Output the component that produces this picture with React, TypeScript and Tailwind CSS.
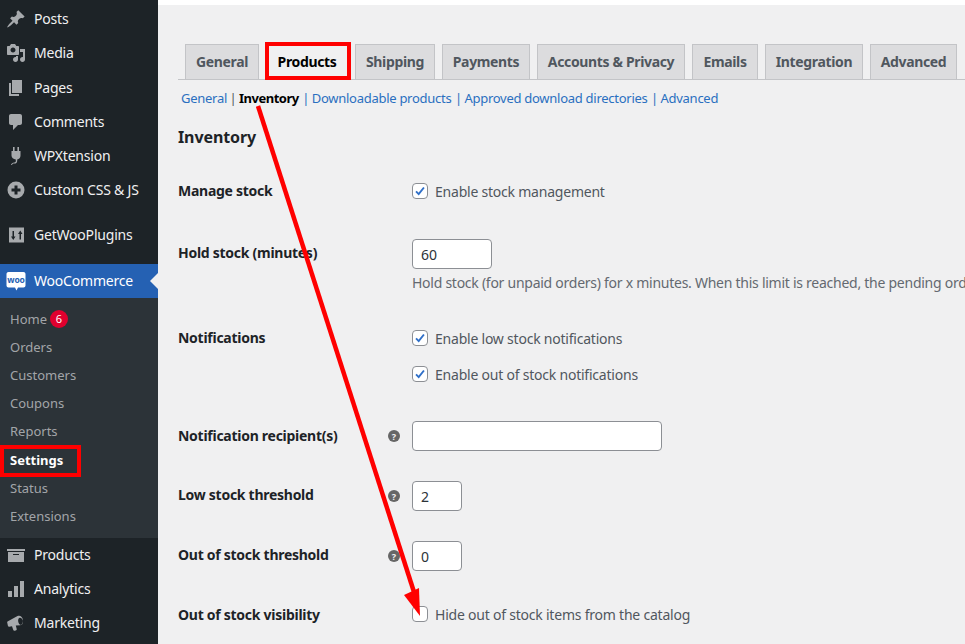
import React from "react";

const Pin = () => <path d="M10.44 3.02l1.82-1.82 6.36 6.35-1.83 1.82c-1.05-.68-2.48-.57-3.41.36l-.75.75c-.92.93-1.04 2.35-.35 3.41l-1.83 1.82-2.41-2.41-2.8 2.79c-.42.42-3.38 2.71-3.8 2.29s1.86-3.39 2.28-3.81l2.79-2.79L4.1 9.36l1.83-1.82c1.05.69 2.48.57 3.4-.36l.75-.75c.93-.92 1.05-2.35.36-3.41z" />;
const Media = () => <path d="M13 11V4c0-.55-.45-1-1-1h-1.67L9 1H5L3.67 3H2c-.55 0-1 .45-1 1v7c0 .55.45 1 1 1h10c.55 0 1-.45 1-1zM7 4.5c1.38 0 2.5 1.12 2.5 2.5S8.38 9.5 7 9.5 4.5 8.38 4.5 7 5.62 4.5 7 4.5zM14 6h5v10.5c0 1.38-1.12 2.5-2.5 2.5S14 17.88 14 16.5s1.12-2.5 2.5-2.5c.17 0 .34.02.5.05V9h-3V6zm-4 8.05V13h2v3.5c0 1.38-1.12 2.5-2.5 2.5S7 17.88 7 16.5 8.12 14 9.5 14c.17 0 .34.02.5.05z" />;
const Page = () => <path d="M6 15V2h10v13H6zm-1 1h8v2H3V5h2v11z" />;
const Comment = () => <path d="M5 2h9c1.1 0 2 .9 2 2v7c0 1.1-.9 2-2 2h-2l-5 5v-5H5c-1.1 0-2-.9-2-2V4c0-1.1.9-2 2-2z" />;
const Plug = () => <path d="M7 1h1.6v4h2.8V1H13v4h1.5v4.5c0 2.1-1.4 3.6-3.3 4V15c0 1.6-1.2 2.6-2.8 2.6-1.3 0-2 .4-2.4 1.4H5c.4-1.6 1.6-2.6 3.4-2.6.9 0 1.4-.4 1.4-1.4v-1.5C7.4 13.100 5.500 11.600 5.500 9.500V5H7z" />;
const PlusCircle = () => <path fillRule="evenodd" d="M10 1.500a8.500 8.500 0 1 1 0 17 8.500 8.500 0 0 1 0-17zM8.500 5.500v3h-3v3h3v3h3v-3h3v-3h-3v-3z" />;
const Sliders = () => <path fillRule="evenodd" d="M3 2.500h15v15H3zM6.500 6v5.500H5L7.250 15 9.500 11.500H8V6zM12 9h1.500v5.500H15V9h1.500L14.250 5.500z" />;
const Archive = () => <path d="M19 4v2H1V4h18zM2 7h16v10H2V7zm11 3V9H7v1h6z" />;
const Bars = () => <path d="M18 18V2h-4v16h4zm-6 0V7H8v11h4zm-6 0v-6H2v6h4z" />;
const Mega = () => <path fillRule="evenodd" d="M1.500 8.500l10-5.500c2.500-1 4.500.300 5.200 3 .7 2.900-.2 5.700-2.500 6.300l-4.400.3.900 3.400c.2.800-.3 1.200-1 1.400l-1 .3c-.7.200-1.300-.100-1.500-.9l-1.200-3.500-2.700.5c-.8.100-1.200-.3-1.400-1L1.200 9.500c-.1-.400 0-.800.300-1zM13.700 4.700c-1.300.3-1.900 2.200-1.400 4.200s1.900 3.300 3.100 3c1.300-.4 1.900-2.300 1.400-4.300s-1.900-3.200-3.100-2.900z" />;

function Item({ icon, label }: { icon: React.ReactNode; label: string }) {
  return (
    <div className="flex h-[34.2px] items-center text-[14px] tracking-[-0.2px] text-[#f0f0f1]">
      <svg viewBox="0 0 20 20" className="ml-[6px] h-[20px] w-[20px] shrink-0 fill-[#a7aaad]">{icon}</svg>
      <span className="ml-[8px] pb-[1px]">{label}</span>
    </div>
  );
}

function Sub({ label, active, badge }: { label: string; active?: boolean; badge?: string }) {
  return (
    <div className={`relative flex h-[28.2px] items-center pl-[10px] text-[13px] ${active ? "font-bold text-white" : "text-[#c3c4c7]/80"}`}>
      <span>{label}</span>
      {badge && (
        <span className="ml-[3px] flex h-[18px] w-[18px] items-center justify-center rounded-full bg-[#e0002e] text-[11px] text-white">{badge}</span>
      )}
      {active && <span className="absolute left-0 top-[-1px] h-[32px] w-[81px] border-[4px] border-[#ff0000]" />}
    </div>
  );
}

function Tab({ label, active, w }: { label: string; active?: boolean; w: string }) {
  return (
    <div className={`relative flex h-[35px] shrink-0 items-center justify-center whitespace-nowrap border border-b-0 border-[#c3c4c7] pb-[1px] text-[14px] font-bold tracking-[-0.35px] ${w} ${active ? "bg-[#f0f0f1] text-black" : "bg-[#dcdcde] text-[#50575e]"}`}>
      {label}
      {active && <span className="absolute bottom-[-1px] left-[-2px] top-[-3px] w-[86px] border-[4px] border-[#ff0000]" />}
    </div>
  );
}

function Check({ on, label }: { on?: boolean; label: string }) {
  return (
    <div className="flex items-center gap-[7px] text-[14px] tracking-[-0.22px] text-[#50575e]">
      <span className="flex h-[16px] w-[16px] items-center justify-center rounded-[4px] border border-[#8c8f94] bg-white">
        {on && (
          <svg viewBox="0 0 16 16" className="h-[14px] w-[14px]">
            <path d="M3.500 8.500l3 3 6-7.500" fill="none" stroke="#2f6fc8" strokeWidth="2.200" />
          </svg>
        )}
      </span>
      {label}
    </div>
  );
}

function Help() {
  return (
    <span className="flex h-[12px] w-[12px] items-center justify-center rounded-full bg-[#666666] text-[9px] font-bold leading-none text-[#f0f0f1]">?</span>
  );
}

function Row({ label, help, children, cls, lbl = "pb-[2px]" }: { label?: string; help?: boolean; children: React.ReactNode; cls: string; lbl?: string }) {
  return (
    <div className={`flex h-[30px] items-center ${cls}`}>
      <div className={`w-[210px] shrink-0 text-[14px] font-bold tracking-[-0.27px] text-[#1d2327] ${lbl}`}>{label}</div>
      <div className="flex w-[24px] shrink-0 items-center">{help && <Help />}</div>
      {children}
    </div>
  );
}

const inputCls = "h-[30px] rounded-[4px] border border-[#8c8f94] bg-white px-[8px] text-[14px] text-[#2c3338] outline-none";

const Pipe = ({ cls }: { cls: string }) => (
  <span className={`flex w-[2px] justify-center ${cls}`}>|</span>
);

export default function App() {
  return (
    <div className="flex h-[644px] w-[965px] overflow-hidden bg-[#f0f0f1] [font-family:'Noto_Sans',sans-serif]">
      <nav className="w-[158px] shrink-0 bg-[#1d2327] pt-[2.15px]">
        <Item icon={<Pin />} label="Posts" />
        <Item icon={<Media />} label="Media" />
        <Item icon={<Page />} label="Pages" />
        <Item icon={<Comment />} label="Comments" />
        <Item icon={<Plug />} label="WPXtension" />
        <Item icon={<PlusCircle />} label="Custom CSS & JS" />
        <div className="mt-[10.85px]">
          <Item icon={<Sliders />} label="GetWooPlugins" />
        </div>
        <div className="relative mt-[11.6px] flex h-[34px] items-center bg-[#2561b3] text-[14px] tracking-[-0.2px] text-white">
          <svg viewBox="0 0 20 20" className="ml-[6px] h-[20px] w-[20px] shrink-0">
            <path d="M2.500 1h15c1.100 0 2 .9 2 2v11.500c0 1.100-.9 2-2 2h-5.500l-1.500 3-1.500-3h-6.500c-1.100 0-2-.9-2-2V3c0-1.100.9-2 2-2z" fill="#fff" />
            <text x="10" y="12" textAnchor="middle" fontSize="8.500" fontWeight="700" fill="#2561b3">woo</text>
          </svg>
          <span className="ml-[8px] pb-[1px]">WooCommerce</span>
          <span className="absolute right-0 top-[9px] h-0 w-0 border-y-[8px] border-r-[8px] border-y-transparent border-r-[#f0f0f1]" />
        </div>
        <div className="bg-[#2c3338] pb-[7px] pt-[7.5px]">
          <Sub label="Home" badge="6" />
          <Sub label="Orders" />
          <Sub label="Customers" />
          <Sub label="Coupons" />
          <Sub label="Reports" />
          <Sub label="Settings" active />
          <Sub label="Status" />
          <Sub label="Extensions" />
        </div>
        <Item icon={<Archive />} label="Products" />
        <Item icon={<Bars />} label="Analytics" />
        <Item icon={<Mega />} label="Marketing" />
      </nav>

      <main className="relative min-w-0 flex-1 overflow-hidden">
        <div className="h-[5px] bg-white" />
        <div className="ml-[20px] mt-[39px] flex gap-[7px] border-b border-[#c3c4c7] pl-[7px]">
          <Tab label="General" w="w-[74px]" />
          <Tab label="Products" active w="w-[82px]" />
          <Tab label="Shipping" w="w-[80px]" />
          <Tab label="Payments" w="w-[88px]" />
          <Tab label="Accounts & Privacy" w="w-[148px]" />
          <Tab label="Emails" w="w-[66px]" />
          <Tab label="Integration" w="w-[98px]" />
          <Tab label="Advanced" w="w-[87px]" />
        </div>
        <div className="ml-[23px] mt-[9px] flex h-[20px] items-center whitespace-nowrap text-[13px] tracking-[-0.27px] text-[#2a6fc0]">
          <span>General</span>
          <Pipe cls="ml-[5px] text-[#50575e]" />
          <span className="ml-[5px] font-bold tracking-[-0.5px] text-black">Inventory</span>
          <Pipe cls="ml-[6px]" />
          <span className="ml-[5px]">Downloadable products</span>
          <Pipe cls="ml-[6px]" />
          <span className="ml-[5px]">Approved download directories</span>
          <Pipe cls="ml-[6px]" />
          <span className="ml-[5px]">Advanced</span>
        </div>
        <h2 className="ml-[20px] mt-[17px] text-[16px] font-bold leading-[22px] tracking-[-0.1px] text-[#1d2327]">Inventory</h2>

        <div className="pl-[20px]">
          <Row label="Manage stock" cls="mt-[28px]">
            <Check on label="Enable stock management" />
          </Row>
          <Row label="Hold stock (minutes)" cls="mt-[33px]" lbl="pb-[4px]">
            <input readOnly value="60" className={`${inputCls} w-[80px]`} />
          </Row>
          <p className="ml-[234px] mt-[3px] h-[22px] whitespace-nowrap text-[14px] leading-[22px] tracking-[-0.26px] text-[#646970]">
            Hold stock (for unpaid orders) for x minutes. When this limit is reached, the pending order will be cancelled. Leave blank to disable.
          </p>
          <Row label="Notifications" cls="mt-[29px]">
            <Check on label="Enable low stock notifications" />
          </Row>
          <Row cls="mt-[6px]">
            <Check on label="Enable out of stock notifications" />
          </Row>
          <Row label="Notification recipient(s)" help cls="mt-[32px]">
            <input readOnly value="" className={`${inputCls} w-[250px]`} />
          </Row>
          <Row label="Low stock threshold" help cls="mt-[30px]" lbl="pb-[4px]">
            <input readOnly value="2" className={`${inputCls} w-[50px]`} />
          </Row>
          <Row label="Out of stock threshold" help cls="mt-[30px]" lbl="pb-[4px]">
            <input readOnly value="0" className={`${inputCls} w-[50px]`} />
          </Row>
          <Row label="Out of stock visibility" cls="mt-[28px]" lbl="pb-0">
            <Check label="Hide out of stock items from the catalog" />
          </Row>
        </div>

        <svg viewBox="158 0 807 644" className="pointer-events-none absolute left-0 top-0 h-[644px] w-[807px]">
          <line x1="258" y1="106" x2="414" y2="592" stroke="#ff0000" strokeWidth="4.500" />
          <polygon points="404,595 419,588 420,616" fill="#ff0000" />
        </svg>
      </main>
    </div>
  );
}
